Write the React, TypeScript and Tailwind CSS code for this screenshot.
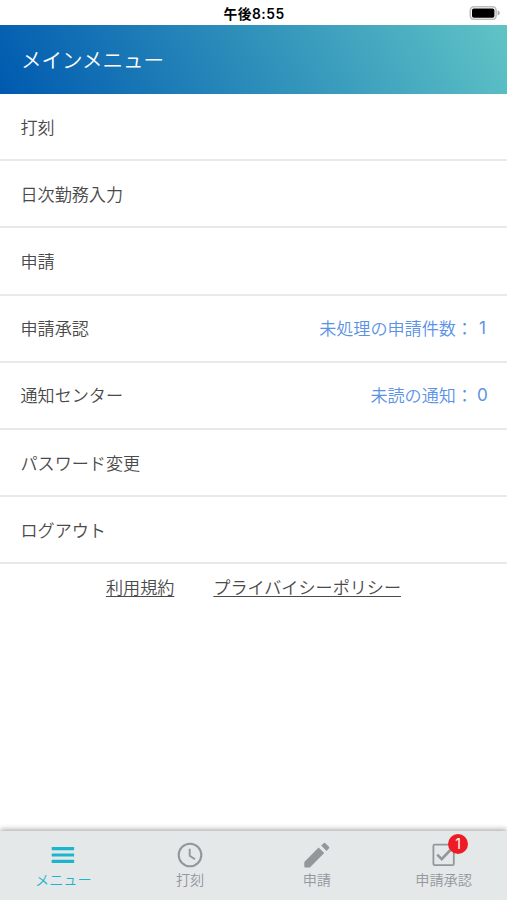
import type { ReactNode } from "react";

const menuItems = [
  { label: "打刻" },
  { label: "日次勤務入力" },
  { label: "申請" },
  { label: "申請承認", note: "未処理の申請件数：", count: 1 },
  { label: "通知センター", note: "未読の通知：", count: 0 },
  { label: "パスワード変更" },
  { label: "ログアウト" },
];

const MenuIcon = () => (
  <svg width="32" height="32" viewBox="0 0 32 32" fill="currentColor">
    <rect x="4.7" y="8.1" width="22.4" height="3.1" rx="0.5" />
    <rect x="4.7" y="14.5" width="22.4" height="3.1" rx="0.5" />
    <rect x="4.7" y="20.8" width="22.4" height="3.1" rx="0.5" />
  </svg>
);

const ClockIcon = () => (
  <svg width="32" height="32" viewBox="0 0 32 32" fill="none" stroke="currentColor">
    <circle cx="16" cy="16" r="11.3" strokeWidth="2.1" />
    <path d="M15.7 9.8v6.9l5.3 3.6" strokeWidth="1.9" />
  </svg>
);

const PencilIcon = () => (
  <svg width="32" height="32" viewBox="0 0 32 32" fill="currentColor">
    <path d="M3.3 23v4.5q0 .9.9.9h4.7L23.2 14.1l-5.6-5.6z" />
    <path d="M27.9 9.4q.8-.8 0-1.6l-3.6-3.6q-.8-.8-1.6 0l-2.5 2.4 5.3 5.3z" />
  </svg>
);

const CheckIcon = () => (
  <svg width="32" height="32" viewBox="0 0 32 32" fill="none" stroke="currentColor">
    <rect x="5.4" y="5.7" width="20.4" height="20.4" rx="1.2" strokeWidth="1.8" />
    <path d="M9.2 15.6l4.5 4.6 8.7-9.2" strokeWidth="2.6" />
  </svg>
);

const Battery = () => (
  <svg width="32" height="14" viewBox="0 0 32 14">
    <rect x="1.3" y="0.8" width="25.8" height="12.6" rx="3.6" fill="#fff" stroke="#bdbdbd" strokeWidth="1.6" />
    <rect x="3" y="2.4" width="22.4" height="9.4" rx="1.8" fill="#000" />
    <path d="M28.6 4.6c2.9.7 2.9 4.3 0 5z" fill="#aaa" />
  </svg>
);

type TabProps = {
  label: string;
  icon: ReactNode;
  active?: boolean;
  badge?: number;
};

const Tab = ({ label, icon, active, badge }: TabProps) => (
  <button
    className={`flex flex-1 flex-col items-center pt-2 ${
      active ? "text-[#1db5cc]" : "text-[#92979b]"
    }`}
  >
    <span className="relative block h-8 w-8">
      {icon}
      {badge ? (
        <span className="absolute -top-[5px] left-[20.5px] flex h-5 w-5 items-center justify-center rounded-full bg-[#ed1c24] font-['Inter',sans-serif] text-[14px] leading-none text-white">
          {badge}
        </span>
      ) : null}
    </span>
    <span className="-mt-px text-[14.2px] leading-[18px] font-[350]">{label}</span>
  </button>
);

export default function App() {
  return (
    <div className="flex h-[900px] w-[507px] flex-col overflow-hidden bg-white font-['Noto_Sans_CJK_JP',sans-serif] text-[#4a4a4a]">
      <div className="grid h-[25px] shrink-0 grid-cols-3 items-center text-black">
        <span className="col-start-2 pt-[2px] pl-px text-center font-['Inter','Noto_Sans_CJK_JP',sans-serif] text-[13.8px] leading-5 font-semibold tracking-[0.5px]">
          午後8:55
        </span>
        <span className="flex justify-end pr-[6px]">
          <Battery />
        </span>
      </div>

      <header className="flex h-[69px] shrink-0 items-center bg-[linear-gradient(60deg,#0059b0_0%,#2e8fba_50%,#60c4c6_100%)] pl-[21px]">
        <h1 className="text-[20.5px] leading-none font-[350] text-white">メインメニュー</h1>
      </header>

      <ul>
        {menuItems.map((item) => (
          <li
            key={item.label}
            className="flex h-[67.2px] items-center justify-between border-b-2 border-[#e9e9e9] pr-[19px] pl-[20.5px] text-[17.1px] leading-6 font-[350]"
          >
            <span>{item.label}</span>
            {item.note ? (
              <span className="flex text-[#5b92e5]">
                {item.note}
                <span className="ml-1 w-[11px] text-center font-['Inter',sans-serif] font-normal">
                  {item.count}
                </span>
              </span>
            ) : null}
          </li>
        ))}
      </ul>

      <div className="flex justify-center gap-[39px] pt-[11px] text-[17.1px] leading-6 font-[350]">
        <a className="underline decoration-1 underline-offset-[2px]">利用規約</a>
        <a className="underline decoration-1 underline-offset-[2px]">プライバイシーポリシー</a>
      </div>

      <nav className="mt-auto flex h-[69px] shrink-0 bg-[#e5e8e9] shadow-[0_-1px_6px_rgba(0,0,0,0.4)]">
        <Tab label="メニュー" icon={<MenuIcon />} active />
        <Tab label="打刻" icon={<ClockIcon />} />
        <Tab label="申請" icon={<PencilIcon />} />
        <Tab label="申請承認" icon={<CheckIcon />} badge={1} />
      </nav>
    </div>
  );
}
